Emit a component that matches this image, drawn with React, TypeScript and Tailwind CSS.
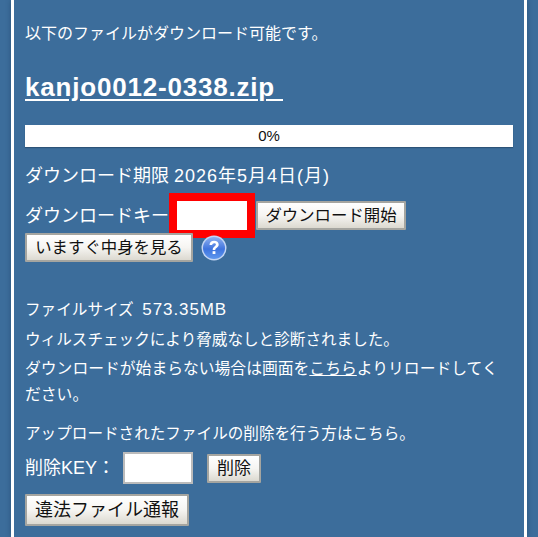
const font = { fontFamily: '"Liberation Sans", "Noto Sans CJK JP", sans-serif' };

const btn =
  "h-[29px] rounded-[1px] border-2 border-[#a5a5a0] bg-gradient-to-b from-[#ffffff] via-[#f6f5f2] to-[#dcd9d0] text-[16.4px] leading-none text-[#111] whitespace-nowrap flex items-center justify-center";

const App = () => {
  return (
    <div
      className="w-[538px] h-[537px] overflow-hidden bg-[#3c6d9b] px-[11px]"
      style={font}
    >
      <div className="h-full border-x-[3px] border-white bg-[#3c6d9b] pl-[11px] pr-[11px] text-white shadow-[0_0_5px_rgba(20,50,80,0.45)]">
        <p className="pt-[24px] text-[16px] leading-[20px]">
          以下のファイルがダウンロード可能です。
        </p>
        <a className="mt-[28px] block text-[26px] font-bold leading-[30px] tracking-[0.8px] underline underline-offset-[3px]">
          kanjo0012-0338.zip&nbsp;
        </a>
        <div className="mt-[23px] h-[22px] bg-white text-center text-[15px] leading-[22px] text-[#111] shadow-[0_1px_1px_#2c5378]">
          0%
        </div>
        <p className="mt-[17px] h-[23px] text-[18px] leading-[24px]">
          ダウンロード期限 <span className="tracking-[1px]">2026年5月4日(月)</span>
        </p>
        <div className="mt-[6px] flex items-center">
          <span className="text-[18px] leading-[24px]">ダウンロードキー</span>
          <input className="h-[45px] w-[86px] border-[8px] border-[#ff0000] bg-white" />
          <button className={`${btn} ml-[1px] w-[150px]`}>ダウンロード開始</button>
        </div>
        <div className="mt-[-5px] flex items-start">
          <button className={`${btn} w-[168px]`}>いますぐ中身を見る</button>
          <svg className="ml-[8px] mt-[2px]" width="26" height="26" viewBox="0 0 26 26">
            <defs>
              <linearGradient id="q" x1="0" y1="0" x2="0" y2="1">
                <stop offset="0" stopColor="#8fb0f0" />
                <stop offset="0.55" stopColor="#3f74de" />
                <stop offset="1" stopColor="#5f97ee" />
              </linearGradient>
            </defs>
            <circle cx="13" cy="13" r="12.5" fill="#c4d6f4" />
            <circle cx="13" cy="13" r="11" fill="url(#q)" />
            <path
              d="M8.5 10c0-2.7 2-4.2 4.6-4.2 2.7 0 4.6 1.5 4.6 3.7 0 1.8-1 2.7-2.2 3.5-.9.6-1.2 1-1.2 2h-2.6c0-1.9.6-2.7 1.8-3.6.9-.7 1.4-1.1 1.4-1.8 0-.9-.7-1.4-1.7-1.4-1.1 0-1.9.7-2 1.9z"
              fill="#fff"
            />
            <rect x="11.6" y="16.2" width="2.8" height="2.8" fill="#fff" />
          </svg>
        </div>
        <p className="mt-[35px] text-[15.6px] leading-[26px]">
          ファイルサイズ&nbsp; <span className="text-[17px] tracking-[0.9px]">573.35MB</span>
        </p>
        <p className="mt-[4px] text-[15.6px] leading-[26px]">ウィルスチェックにより脅威なしと診断されました。</p>
        <p className="mt-[3px] text-[15.8px] leading-[26px]">
          ダウンロードが始まらない場合は画面を<a className="underline">こちら</a>よりリロードしてください。
        </p>
        <p className="mt-[13px] text-[15.6px] leading-[26px]">
          アップロードされたファイルの削除を行う方はこちら。
        </p>
        <div className="mt-[5px] flex items-center">
          <span className="w-[98px] text-[18px] leading-[24px] whitespace-nowrap">削除KEY：</span>
          <input className="h-[32px] w-[70px] border-2 border-[#bbb] bg-white" />
          <button className={`${btn} ml-[14px] w-[54px] text-[17px]`}>削除</button>
        </div>
        <button className={`${btn} mt-[10px] h-[32px] w-[164px] text-[18px]`}>違法ファイル通報</button>
      </div>
    </div>
  );
};

export default App;
